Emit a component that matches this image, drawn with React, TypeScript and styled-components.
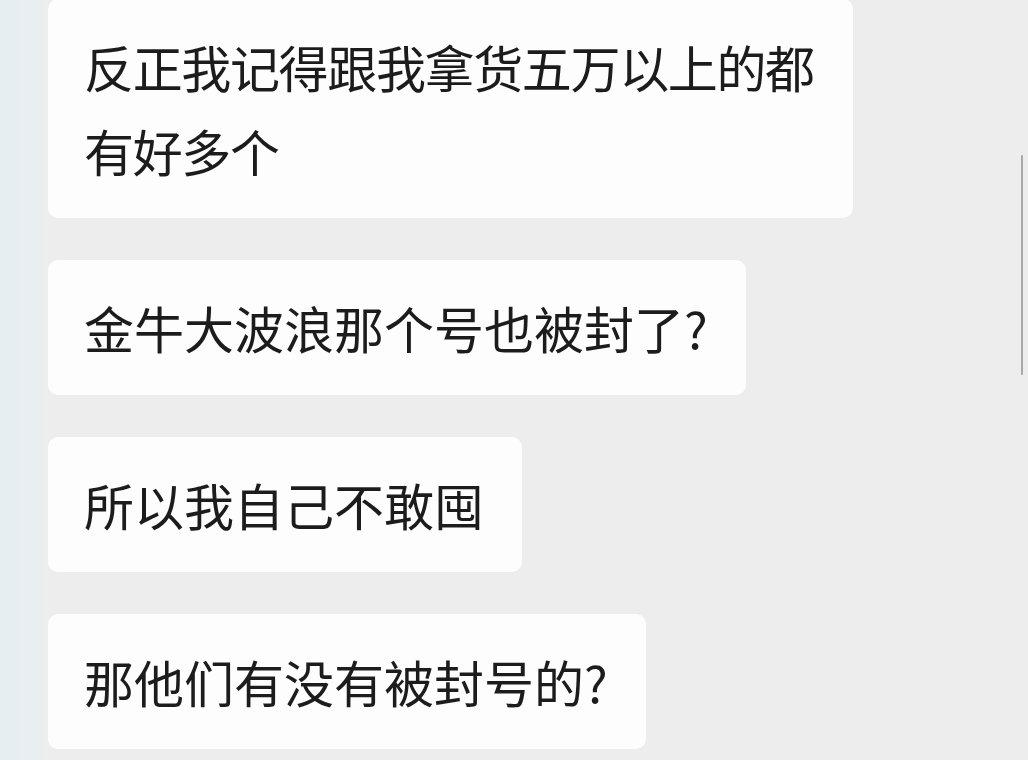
import React from 'react';
import styled, { createGlobalStyle } from 'styled-components';

const GlobalStyle = createGlobalStyle`
  html, body {
    margin: 0;
    padding: 0;
    background: #ededed;
  }
  body {
    font-family: "Noto Sans CJK SC", "Noto Sans", sans-serif;
  }
`;

const Page = styled.div`
  position: relative;
  display: flex;
  width: 1028px;
  height: 760px;
  overflow: hidden;
  background: #ededed;
`;

const SideStrip = styled.div`
  flex: 0 0 46px;
  background: linear-gradient(to right, #e6eef2, #e9eef1 80%, #ececec);
`;

const Feed = styled.div`
  display: flex;
  flex-direction: column;
  align-items: flex-start;
  gap: 42px;
  margin-top: -1px;
  padding-left: 2px;
`;

const Bubble = styled.div<{ $maxWidth?: number; $spacing?: number }>`
  box-sizing: border-box;
  max-width: ${p => (p.$maxWidth ? `${p.$maxWidth}px` : 'none')};
  padding: 25px 38px 26px 36px;
  background: #fdfdfd;
  border-radius: 10px;
  color: #1c1c1c;
  font-size: 50px;
  line-height: 84px;
  letter-spacing: ${p => p.$spacing ?? 0}px;
  font-family: "Noto Sans CJK SC", "Noto Sans", sans-serif;
`;

const ScrollThumb = styled.div`
  position: absolute;
  top: 155px;
  right: 5px;
  width: 2px;
  height: 220px;
  background: #a8a8a8;
  border-radius: 1px;
`;

const messages = [
  { text: '反正我记得跟我拿货五万以上的都有好多个', maxWidth: 805, spacing: -1.35 },
  { text: '金牛大波浪那个号也被封了?' },
  { text: '所以我自己不敢囤' },
  { text: '那他们有没有被封号的?' },
];

const App: React.FC = () => (
  <>
    <GlobalStyle />
    <Page>
      <SideStrip />
      <Feed>
        {messages.map(m => (
          <Bubble key={m.text} $maxWidth={m.maxWidth} $spacing={m.spacing}>
            {m.text}
          </Bubble>
        ))}
      </Feed>
      <ScrollThumb />
    </Page>
  </>
);

export default App;
